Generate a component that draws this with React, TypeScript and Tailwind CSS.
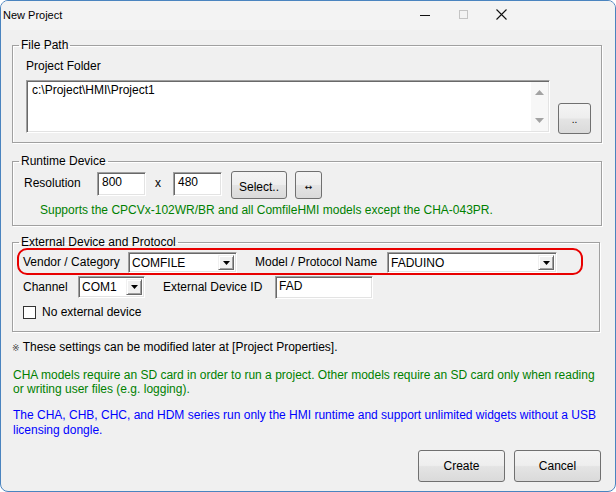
import React from "react";

const sunken =
  "bg-white border border-t-[#a0a0a0] border-l-[#a0a0a0] border-b-white border-r-white shadow-[inset_1px_1px_0_#696969,inset_-1px_-1px_0_#e3e3e3]";

const btn =
  "border border-[#707070] rounded-[3px] bg-[linear-gradient(to_bottom,#f4f4f4_0%,#eeeeee_48%,#e4e4e4_52%,#dadada_100%)] flex items-center justify-center";

const groupBox =
  "border border-[#a0a0a0] shadow-[1px_1px_0_#ffffff,inset_1px_1px_0_#ffffff] p-0 m-0 min-w-0";

function DropArrow() {
  return (
    <div className="w-[16px] self-stretch my-[2px] mr-[2px] bg-[#f0f0f0] border border-t-[#f0f0f0] border-l-[#f0f0f0] border-b-[#696969] border-r-[#696969] shadow-[inset_1px_1px_0_#ffffff,inset_-1px_-1px_0_#a0a0a0] flex items-center justify-center">
      <svg width="7" height="4" viewBox="0 0 7 4">
        <path d="M0 0 H7 L3.5 4 Z" fill="#000" />
      </svg>
    </div>
  );
}

function Select({ value, w, h }: { value: string; w: string; h: string }) {
  return (
    <div className={`${sunken} ${w} ${h} flex items-stretch`}>
      <div className="flex-1 pl-[3px] flex items-center">{value}</div>
      <DropArrow />
    </div>
  );
}

export default function App() {
  return (
    <div className="w-[616px] h-[492px] bg-[#f0f0f0] border border-[#4a84bf] rounded-[8px] overflow-hidden flex flex-col text-[12px] leading-[14px] text-black font-['Liberation_Sans',Arial,'Noto_Sans_CJK_JP',sans-serif]">
      {/* Title bar */}
      <div className="h-[29px] shrink-0 bg-[#f3f3f3] flex items-center">
        <span className="pl-[2px] text-[11px] mt-[-2px]">New Project</span>
        <div className="ml-auto flex items-center pr-[108px] mt-[-2px]">
          <svg width="10" height="10" viewBox="0 0 10 10">
            <path d="M0 5.5 H10" stroke="#111" strokeWidth="1" />
          </svg>
          <svg width="10" height="10" viewBox="0 0 10 10" className="ml-[29px]">
            <rect x="0.5" y="0.5" width="8" height="8" fill="none" stroke="#c4c4c4" />
          </svg>
          <svg width="11" height="11" viewBox="0 0 11 11" className="ml-[27px]">
            <path d="M0.5 0.5 L10.5 10.5 M10.5 0.5 L0.5 10.5" stroke="#111" strokeWidth="1.1" />
          </svg>
        </div>
      </div>

      <div className="flex-1 flex flex-col px-[11px]">
        {/* File Path */}
        <fieldset className={`${groupBox} mt-[8px] w-[590px]`}>
          <legend className="ml-[6px] px-[2px] leading-[14px]">File Path</legend>
          <div className="pl-[13px] pb-[8px]">
            <div className="mt-[7px]">Project Folder</div>
            <div className="mt-[7px] flex items-start">
              <div className={`${sunken} w-[524px] h-[53px] flex`}>
                <div className="flex-1 pl-[5px] pt-[2px]">c:\Project\HMI\Project1</div>
                <div className="w-[17px] my-[1px] mr-[1px] bg-[#f7f7f7] flex flex-col items-center justify-between py-[8px]">
                  <svg width="9" height="5" viewBox="0 0 9 5">
                    <path d="M0 5 L4.5 0 L9 5 Z" fill="#a3a3a3" />
                  </svg>
                  <svg width="9" height="5" viewBox="0 0 9 5">
                    <path d="M0 0 L9 0 L4.5 5 Z" fill="#a3a3a3" />
                  </svg>
                </div>
              </div>
              <button className={`${btn} ml-[8px] mt-[23px] w-[33px] h-[31px] text-[10px] pt-[2px]`}>..</button>
            </div>
          </div>
        </fieldset>

        {/* Runtime Device */}
        <fieldset className={`${groupBox} mt-[11px] w-[590px]`}>
          <legend className="ml-[6px] px-[2px] leading-[14px]">Runtime Device</legend>
          <div className="pl-[11px] pt-[3px] pb-[8px]">
            <div className="flex items-start h-[28px]">
              <span className="w-[73px] mt-[5px]">Resolution</span>
              <div className={`${sunken} w-[49px] h-[24px] mt-[1px] pl-[4px] pt-[2px]`}>800</div>
              <span className="w-[27px] pl-[9px] mt-[5px]">x</span>
              <div className={`${sunken} w-[49px] h-[24px] mt-[1px] pl-[4px] pt-[2px]`}>480</div>
              <button className={`${btn} ml-[9px] w-[56px] h-[28px] pt-[3px]`}>Select..</button>
              <button className={`${btn} ml-[8px] w-[27px] h-[28px] pt-[4px]`}>
                <span className="font-['DejaVu_Sans',sans-serif] text-[9px] leading-[10px]">↔</span>
              </button>
            </div>
            <div className="mt-[4px] pl-[16px] text-[#008000]">
              Supports the CPCVx-102WR/BR and all ComfileHMI models except the CHA-043PR.
            </div>
          </div>
        </fieldset>

        {/* External Device and Protocol */}
        <fieldset className={`${groupBox} mt-[9px] w-[588px]`}>
          <legend className="ml-[6px] px-[2px] leading-[14px]">External Device and Protocol</legend>
          <div className="pb-[12px]">
            <div className="mt-[-1px] ml-[4px] w-[566px] h-[27px] border-2 border-[#e80000] rounded-[10px] flex items-start pl-[4px] pt-[2px]">
              <span className="w-[105px] mt-[3px]">Vendor / Category</span>
              <Select value="COMFILE" w="w-[109px]" h="h-[21px]" />
              <span className="ml-[18px] w-[132px] mt-[3px]">Model / Protocol Name</span>
              <Select value="FADUINO" w="w-[170px]" h="h-[21px]" />
            </div>
            <div className="mt-[1px] ml-[10px] flex items-start">
              <span className="w-[55px] mt-[4px]">Channel</span>
              <Select value="COM1" w="w-[67px]" h="h-[22px]" />
              <span className="ml-[18px] w-[112px] mt-[4px]">External Device ID</span>
              <div className={`${sunken} w-[98px] h-[23px] pl-[3px] pt-[2px]`}>FAD</div>
            </div>
            <div className="mt-[6px] ml-[10px] flex items-center">
              <div className="w-[13px] h-[13px] bg-white border border-[#333333]" />
              <span className="ml-[6px]">No external device</span>
            </div>
          </div>
        </fieldset>

        <div className="mt-[8px] pl-[0px]">
          <span className="font-['DejaVu_Sans',sans-serif] text-[9px] text-[#444]">※</span> These settings can be modified later at [Project Properties].
        </div>
        <div className="mt-[13px] pl-[1px] text-[#008000] leading-[14px]">
          CHA models require an SD card in order to run a project. Other models require an SD card only when reading
          <br />
          or writing user files (e.g. logging).
        </div>
        <div className="mt-[12px] pl-[1px] text-[#0000ff] leading-[15px]">
          The CHA, CHB, CHC, and HDM series run only the HMI runtime and support unlimited widgets without a USB
          <br />
          licensing dongle.
        </div>

        <div className="mt-auto flex justify-end gap-[9px] pr-[3px] pb-[9px]">
          <button className={`${btn} w-[87px] h-[32px]`}>Create</button>
          <button className={`${btn} w-[87px] h-[32px]`}>Cancel</button>
        </div>
      </div>
    </div>
  );
}
